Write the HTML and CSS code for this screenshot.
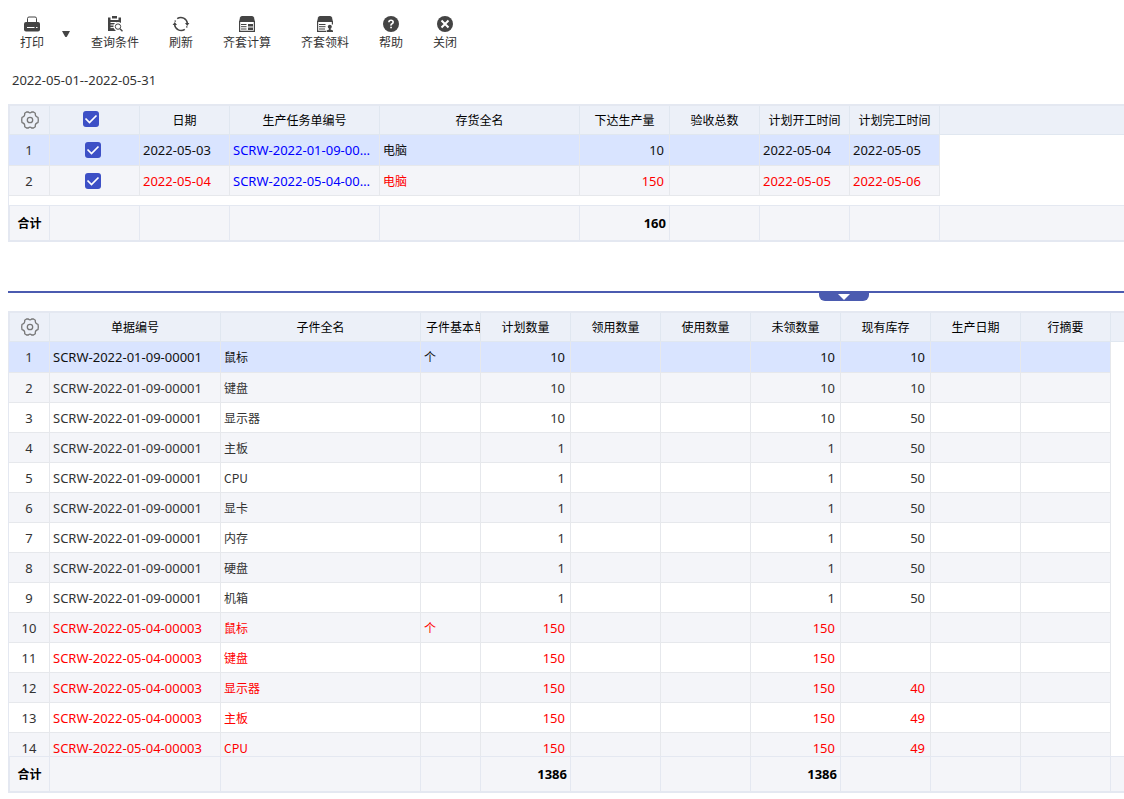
FILE: index.html
```
<!DOCTYPE html>
<html lang="zh-CN">
<head>
  <meta charset="UTF-8">
  <title>齐套领料</title>
  <link rel="stylesheet" href="styles.css">
</head>
<body>
  <svg class="defs" width="0" height="0" aria-hidden="true">
    <symbol id="gear" viewBox="0 0 18 18">
      <path d="M5.5 1H7.300Q9 2.800 10.700 1H12.500L14.300 2.200Q13.800 5.600 17 6.300L17.300 9L17 11.700Q13.800 12.400 14.300 15.800L12.500 17H10.700Q9 15.200 7.300 17H5.500L3.700 15.800Q4.200 12.400 1 11.700L.7 9L1 6.300Q4.200 5.600 3.700 2.200Z" fill="none" stroke="#777" stroke-width="1.300" stroke-linejoin="round"/>
      <circle cx="9" cy="9" r="2.700" fill="none" stroke="#777" stroke-width="1.300"/>
    </symbol>
  </svg>

  <header class="toolbar">
    <button type="button" class="tool">
      <svg viewBox="0 0 16 16"><path d="M3.500 6.500V2.500q0-1.500 1.500-1.500h6q1.500 0 1.500 1.500v4" fill="none" stroke="#444"/><path d="M2 6h12q2 0 2 2v5.500q0 2-2 2H2q-2 0-2-2V8q0-2 2-2z" fill="#444"/><path d="M3 11.500h7.500M12 11.500h1.500" stroke="#fff"/></svg>
      <span>打印</span>
    </button>
    <button type="button" class="tool-arrow" aria-label="打印选项"><svg viewBox="0 0 8 6"><path d="M0 0h8L5 5.400q-1 1-2 0z" fill="#444"/></svg></button>
    <button type="button" class="tool">
      <svg viewBox="0 0 16 16"><path d="M1 1.500h2.500V4h8V1.500H14V7a4.600 4.600 0 0 0-6 7l1 1H1z" fill="#444"/><path d="M5 0h5v2.500H5z" fill="#444"/><path d="M3.500 6.500h6M3.500 9h4M3.500 11.600h3.500" stroke="#fff"/><circle cx="11" cy="10.600" r="2.700" fill="#fff" stroke="#444"/><path d="M13 12.700l2.500 2.600" stroke="#444" stroke-width="1.300"/></svg>
      <span>查询条件</span>
    </button>
    <button type="button" class="tool">
      <svg viewBox="0 0 16 16"><path d="M4.200 2.700A6.500 6.500 0 0 1 14.400 7.500M11.800 13.300A6.500 6.500 0 0 1 1.600 8.500M1.900 5.600L2.500 4.500M14.100 10.400L13.500 11.500" fill="none" stroke="#444" stroke-width="1.500"/><path d="M12 7h4.400l-2.200 3zM-.4 9h4.400L1.800 6z" fill="#444"/></svg>
      <span>刷新</span>
    </button>
    <button type="button" class="tool">
      <svg viewBox="0 0 16 16"><path d="M3 0h10q1.500 0 2 1.500L16 6H0l1-4.500Q1.500 0 3 0z" fill="#444"/><path d="M.6 5v10.400h14.800V5" fill="none" stroke="#444" stroke-width="1.200"/><path d="M2 8.500h5.500M2 10.700h5.500M2 13h5.500" stroke="#444"/><path d="M9 8h5v2.500H9zM9 11.500h5V14H9z" fill="#444"/></svg>
      <span>齐套计算</span>
    </button>
    <button type="button" class="tool">
      <svg viewBox="0 0 16 16"><path d="M3 0h10q1.500 0 2 1.500L16 6H0l1-4.500Q1.500 0 3 0z" fill="#444"/><path d="M.6 5v10.400H9M15.400 5v3.500" fill="none" stroke="#444" stroke-width="1.200"/><path d="M2 8.500h6.500M2 10.700h6.500M2 13h6" stroke="#444"/><circle cx="12.800" cy="10.800" r="2" fill="#444"/><path d="M12 12h1.600v1.500L16 14.400V16H9.600v-1.600l2.400-.9z" fill="#444"/></svg>
      <span>齐套领料</span>
    </button>
    <button type="button" class="tool">
      <svg viewBox="0 0 16 16"><circle cx="8" cy="8" r="8" fill="#444"/><path d="M5.900 6.300Q5.900 4.300 8 4.300t2.200 1.800Q10.200 7.200 9 7.800T8 9.700" fill="none" stroke="#fff" stroke-width="1.600"/><path d="M7.200 10.700h1.700v1.600H7.200z" fill="#fff"/></svg>
      <span>帮助</span>
    </button>
    <button type="button" class="tool">
      <svg viewBox="0 0 16 16"><circle cx="8" cy="8" r="8" fill="#444"/><path d="M4.500 4.500l7 7M11.500 4.500l-7 7" stroke="#fff" stroke-width="2"/></svg>
      <span>关闭</span>
    </button>
  </header>

  <p class="period">2022-05-01--2022-05-31</p>

  <section class="grid">
    <div class="grid-body">
      <table>
        <colgroup><col class="w-index"><col class="w-90"><col class="w-90"><col class="w-150"><col class="w-200"><col class="w-90"><col class="w-90"><col class="w-90"><col class="w-90"><col></colgroup>
        <thead>
          <tr><th><button type="button" class="gear" aria-label="列设置"><svg><use href="#gear"/></svg></button></th><th class="check-all"><input type="checkbox" aria-label="全选" checked></th><th>日期</th><th>生产任务单编号</th><th>存货全名</th><th>下达生产量</th><th>验收总数</th><th>计划开工时间</th><th>计划完工时间</th><th></th></tr>
        </thead>
        <tbody>
          <tr class="selected"><td class="index">1</td><td class="check"><input type="checkbox" aria-label="选择第1行" checked></td><td>2022-05-03</td><td class="order"><a href="#">SCRW-2022-01-09-00001</a></td><td class="name">电脑</td><td class="num">10</td><td></td><td>2022-05-04</td><td>2022-05-05</td></tr>
          <tr class="short"><td class="index">2</td><td class="check"><input type="checkbox" aria-label="选择第2行" checked></td><td>2022-05-04</td><td class="order"><a href="#">SCRW-2022-05-04-00003</a></td><td class="name">电脑</td><td class="num">150</td><td></td><td>2022-05-05</td><td>2022-05-06</td></tr>
        </tbody>
      </table>
    </div>
    <table class="total">
      <colgroup><col class="w-index"><col class="w-90"><col class="w-90"><col class="w-150"><col class="w-200"><col class="w-90"><col class="w-90"><col class="w-90"><col class="w-90"><col></colgroup>
      <tbody>
        <tr><th>合计</th><td></td><td></td><td></td><td></td><td class="num">160</td><td></td><td></td><td></td><td></td></tr>
      </tbody>
    </table>
  </section>

  <div class="splitter">
    <button type="button" class="splitter-handle" aria-label="收起明细"><svg viewBox="0 0 12 6"><path d="M0 0h12L6 6z" fill="#fff"/></svg></button>
  </div>

  <section class="grid detail">
    <div class="grid-body">
      <table>
        <colgroup><col class="w-index"><col class="w-171"><col class="w-200"><col class="w-60"><col class="w-90"><col class="w-90"><col class="w-90"><col class="w-90"><col class="w-90"><col class="w-90"><col class="w-90"><col></colgroup>
        <thead>
          <tr><th><button type="button" class="gear" aria-label="列设置"><svg><use href="#gear"/></svg></button></th><th>单据编号</th><th>子件全名</th><th>子件基本单位</th><th>计划数量</th><th>领用数量</th><th>使用数量</th><th>未领数量</th><th>现有库存</th><th>生产日期</th><th>行摘要</th><th></th></tr>
        </thead>
        <tbody>
          <tr class="selected"><td class="index">1</td><td>SCRW-2022-01-09-00001</td><td class="name">鼠标</td><td class="name">个</td><td class="num">10</td><td></td><td></td><td class="num">10</td><td class="num">10</td><td></td><td></td></tr>
          <tr><td class="index">2</td><td>SCRW-2022-01-09-00001</td><td class="name">键盘</td><td></td><td class="num">10</td><td></td><td></td><td class="num">10</td><td class="num">10</td><td></td><td></td></tr>
          <tr><td class="index">3</td><td>SCRW-2022-01-09-00001</td><td class="name">显示器</td><td></td><td class="num">10</td><td></td><td></td><td class="num">10</td><td class="num">50</td><td></td><td></td></tr>
          <tr><td class="index">4</td><td>SCRW-2022-01-09-00001</td><td class="name">主板</td><td></td><td class="num">1</td><td></td><td></td><td class="num">1</td><td class="num">50</td><td></td><td></td></tr>
          <tr><td class="index">5</td><td>SCRW-2022-01-09-00001</td><td class="name">CPU</td><td></td><td class="num">1</td><td></td><td></td><td class="num">1</td><td class="num">50</td><td></td><td></td></tr>
          <tr><td class="index">6</td><td>SCRW-2022-01-09-00001</td><td class="name">显卡</td><td></td><td class="num">1</td><td></td><td></td><td class="num">1</td><td class="num">50</td><td></td><td></td></tr>
          <tr><td class="index">7</td><td>SCRW-2022-01-09-00001</td><td class="name">内存</td><td></td><td class="num">1</td><td></td><td></td><td class="num">1</td><td class="num">50</td><td></td><td></td></tr>
          <tr><td class="index">8</td><td>SCRW-2022-01-09-00001</td><td class="name">硬盘</td><td></td><td class="num">1</td><td></td><td></td><td class="num">1</td><td class="num">50</td><td></td><td></td></tr>
          <tr><td class="index">9</td><td>SCRW-2022-01-09-00001</td><td class="name">机箱</td><td></td><td class="num">1</td><td></td><td></td><td class="num">1</td><td class="num">50</td><td></td><td></td></tr>
          <tr class="short"><td class="index">10</td><td>SCRW-2022-05-04-00003</td><td class="name">鼠标</td><td class="name">个</td><td class="num">150</td><td></td><td></td><td class="num">150</td><td></td><td></td><td></td></tr>
          <tr class="short"><td class="index">11</td><td>SCRW-2022-05-04-00003</td><td class="name">键盘</td><td></td><td class="num">150</td><td></td><td></td><td class="num">150</td><td></td><td></td><td></td></tr>
          <tr class="short"><td class="index">12</td><td>SCRW-2022-05-04-00003</td><td class="name">显示器</td><td></td><td class="num">150</td><td></td><td></td><td class="num">150</td><td class="num">40</td><td></td><td></td></tr>
          <tr class="short"><td class="index">13</td><td>SCRW-2022-05-04-00003</td><td class="name">主板</td><td></td><td class="num">150</td><td></td><td></td><td class="num">150</td><td class="num">49</td><td></td><td></td></tr>
          <tr class="short"><td class="index">14</td><td>SCRW-2022-05-04-00003</td><td class="name">CPU</td><td></td><td class="num">150</td><td></td><td></td><td class="num">150</td><td class="num">49</td><td></td><td></td></tr>
        </tbody>
      </table>
    </div>
    <table class="total">
      <colgroup><col class="w-index"><col class="w-171"><col class="w-200"><col class="w-60"><col class="w-90"><col class="w-90"><col class="w-90"><col class="w-90"><col class="w-90"><col class="w-90"><col class="w-90"><col></colgroup>
      <tbody>
        <tr><th>合计</th><td></td><td></td><td></td><td class="num">1386</td><td></td><td></td><td class="num">1386</td><td></td><td></td><td></td><td></td></tr>
      </tbody>
    </table>
  </section>
</body>
</html>
```
FILE: styles.css
```
* {
  box-sizing: border-box;
}
body {
  display: flex;
  flex-direction: column;
  height: 100vh;
  margin: 0;
  padding: 0 0 6px 8px;
  background: #fff;
  color: #333;
  font-family: "Noto Sans", "Noto Sans CJK SC", sans-serif;
  font-size: 13px;
  line-height: 18px;
  overflow: hidden;
}
button {
  padding: 0;
  border: 0;
  background: none;
  color: inherit;
  font: inherit;
  cursor: pointer;
}
.defs {
  position: absolute;
}

/* toolbar */
.toolbar {
  display: flex;
  gap: 30px;
  padding: 16px 12px 0;
}
.tool {
  display: flex;
  flex-direction: column;
  align-items: center;
  gap: 1px;
  font-family: "Noto Sans CJK SC", sans-serif;
  font-size: 12px;
}
.tool svg {
  width: 16px;
  height: 16px;
  overflow: visible;
}
.tool-arrow {
  display: flex;
  align-items: center;
  margin: 0 -9px 0 -12px;
}
.tool-arrow svg {
  width: 8px;
  height: 6px;
}
.period {
  margin: 20px 4px 15px;
}

/* grids */
.grid {
  display: flex;
  flex-direction: column;
  border: solid #e4e8f1;
  border-width: 2px 0 2px 1px;
}
.grid-body {
  padding-bottom: 9px;
}
.detail {
  flex: 1;
  min-height: 0;
}
.detail .grid-body {
  flex: 1;
  min-height: 0;
  padding: 0;
  overflow-y: auto;
  scrollbar-width: none;
}
table {
  width: 100%;
  table-layout: fixed;
  border-collapse: separate;
  border-spacing: 0;
}
.w-index { width: 41px; }
.w-60 { width: 60px; }
.w-90 { width: 90px; }
.w-150 { width: 150px; }
.w-171 { width: 171px; }
.w-200 { width: 200px; }

th, td {
  height: 30px;
  padding: 0 3px;
  border: solid #e6e8ec;
  border-width: 0 1px 1px 0;
  text-align: left;
  white-space: nowrap;
  overflow: hidden;
}
thead th {
  position: sticky;
  top: 0;
  height: 29px;
  padding: 0 5px;
  border-color: #e0e7f0;
  background: #ecf0f8;
  color: #000;
  font-family: "Noto Sans CJK SC", sans-serif;
  font-size: 12px;
  font-weight: normal;
  text-align: center;
}
th:first-child {
  border-left: 1px solid #e4e8f1;
}
th:last-child,
.total td:last-child {
  border-right: 0;
}
tbody tr:nth-child(even) td,
.total tbody td,
.total tbody th {
  background: #f4f5f9;
}
tbody .selected td {
  height: 31px;
  background: #d9e4ff;
  color: #111;
}
.short td {
  color: #f00;
}
tbody td.index {
  color: #333;
  text-align: center;
}
td.num {
  padding-right: 5px;
  text-align: right;
}
td.name,
.total th {
  font-family: "Noto Sans CJK SC", sans-serif;
  font-size: 12px;
}
td.order {
  text-overflow: ellipsis;
}
tbody td.order,
td.order a {
  color: #00f;
  text-decoration: none;
}
td.check {
  padding-right: 6px;
}
thead th.check-all {
  padding: 0 10px 3px 3px;
}
.total th,
.total td {
  height: 35px;
  border-width: 1px 1px 0 0;
  border-color: #e4e8f1;
  color: #000;
  font-weight: bold;
}
.total th {
  border-left-width: 1px;
  text-align: center;
}
.total td.num {
  padding-right: 3px;
}

input[type="checkbox"] {
  display: block;
  width: 16px;
  height: 16px;
  margin: 0 auto;
  border-radius: 3px;
  appearance: none;
  background: #fff;
  border: 1px solid #3d50c6;
}
input[type="checkbox"]:checked {
  border: 0;
  background: #3d50c6 url("data:image/svg+xml,%3Csvg xmlns='http://www.w3.org/2000/svg' viewBox='0 0 16 16'%3E%3Cpath d='M2.500 7.500l4 4 7-7' fill='none' stroke='white' stroke-width='1.700'/%3E%3C/svg%3E");
}
.gear {
  display: block;
  width: 18px;
  height: 18px;
  margin: 0 auto;
}
.gear svg {
  display: block;
  width: 18px;
  height: 18px;
}

/* divider between the two grids */
.splitter {
  display: flex;
  justify-content: flex-end;
  height: 10px;
  margin: 49px 0 10px;
  padding-right: 255px;
  border-top: 2px solid #4b5bb0;
}
.splitter-handle {
  display: flex;
  justify-content: center;
  width: 50px;
  height: 8px;
  padding-top: 1px;
  border-radius: 0 0 6px 6px;
  background: #4b5bb0;
}
.splitter-handle svg {
  width: 12px;
  height: 6px;
}
```
